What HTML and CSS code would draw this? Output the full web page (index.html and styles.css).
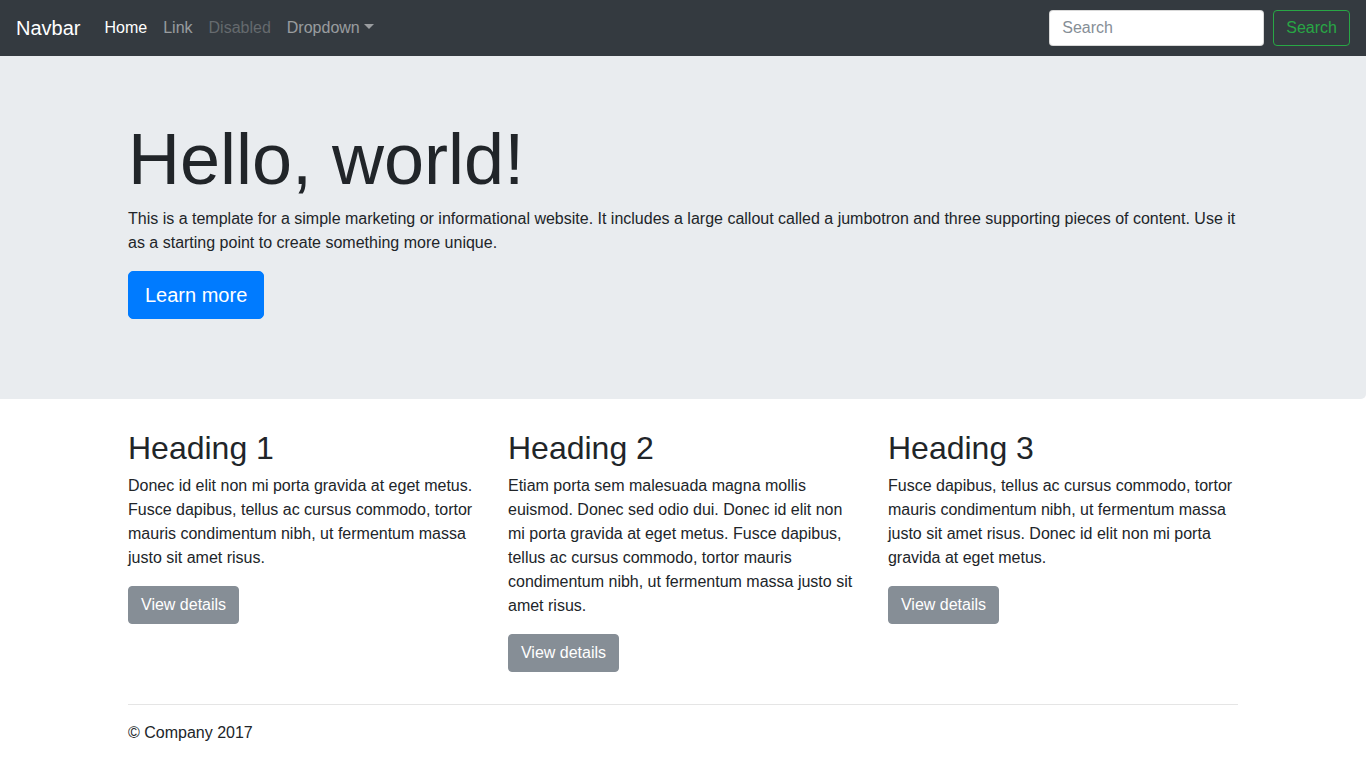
FILE: index.html
```
<!DOCTYPE html>
<html lang="en">
<head>
<meta charset="utf-8">
<title>Jumbotron Template</title>
<link rel="stylesheet" href="styles.css">
</head>
<body>
<nav class="navbar">
  <a class="brand" href="#">Navbar</a>
  <ul class="nav">
    <li><a class="nav-link active" href="#">Home</a></li>
    <li><a class="nav-link" href="#">Link</a></li>
    <li><a class="nav-link disabled" href="#">Disabled</a></li>
    <li><a class="nav-link dropdown-toggle" href="#">Dropdown</a></li>
  </ul>
  <form class="search-form">
    <input class="search-input" type="text" placeholder="Search">
    <button class="btn-outline-success" type="button">Search</button>
  </form>
</nav>
<main>
  <div class="jumbotron">
    <div class="container">
      <h1 class="display">Hello, world!</h1>
      <p class="lead-text">This is a template for a simple marketing or informational website. It includes a large callout called a jumbotron and three supporting pieces of content. Use it as a starting point to create something more unique.</p>
      <p class="lead-text"><a class="btn btn-primary btn-lg" href="#">Learn more</a></p>
    </div>
  </div>
  <div class="container">
    <div class="row">
      <div class="col">
        <h2 class="heading">Heading 1</h2>
        <p class="text">Donec id elit non mi porta gravida at eget metus. Fusce dapibus, tellus ac cursus commodo, tortor mauris condimentum nibh, ut fermentum massa justo sit amet risus.</p>
        <p class="text"><a class="btn btn-secondary" href="#">View details</a></p>
      </div>
      <div class="col">
        <h2 class="heading">Heading 2</h2>
        <p class="text">Etiam porta sem malesuada magna mollis euismod. Donec sed odio dui. Donec id elit non mi porta gravida at eget metus. Fusce dapibus, tellus ac cursus commodo, tortor mauris condimentum nibh, ut fermentum massa justo sit amet risus.</p>
        <p class="text"><a class="btn btn-secondary" href="#">View details</a></p>
      </div>
      <div class="col">
        <h2 class="heading">Heading 3</h2>
        <p class="text">Fusce dapibus, tellus ac cursus commodo, tortor mauris condimentum nibh, ut fermentum massa justo sit amet risus. Donec id elit non mi porta gravida at eget metus.</p>
        <p class="text"><a class="btn btn-secondary" href="#">View details</a></p>
      </div>
    </div>
    <hr class="rule">
  </div>
</main>
<footer class="container">
  <p class="text">&copy; Company 2017</p>
</footer>
</body>
</html>
```
FILE: styles.css
```
* { box-sizing: border-box; }
html, body { margin: 0; padding: 0; }
body {
  font-family: "Liberation Sans", Arial, sans-serif;
  font-size: 16px;
  line-height: 1.5;
  color: #212529;
  background: #fff;
}
a { text-decoration: none; }

.navbar {
  display: flex;
  align-items: center;
  height: 56px;
  padding: 8px 16px;
  background: #343a40;
}
.brand {
  font-size: 20px;
  line-height: 30px;
  padding: 5px 0;
  margin-right: 16px;
  color: #fff;
}
.nav {
  display: flex;
  list-style: none;
  margin: 0;
  padding: 0;
}
.nav-link {
  display: block;
  padding: 8px;
  color: rgba(255,255,255,.5);
}
.nav-link.active { color: #fff; }
.nav-link.disabled { color: rgba(255,255,255,.25); }
.dropdown-toggle::after {
  content: "";
  display: inline-block;
  margin-left: 4px;
  vertical-align: 4px;
  border-top: 5px solid;
  border-left: 5px solid transparent;
  border-right: 5px solid transparent;
}
.search-form {
  margin-left: auto;
  display: flex;
  align-items: center;
}
.search-input {
  width: 215px;
  height: 36px;
  padding: 6px 12px;
  margin-right: 9px;
  font-family: inherit;
  font-size: 16px;
  color: #495057;
  background: #fff;
  border: 1px solid rgba(0,0,0,.15);
  border-radius: 4px;
  outline: none;
}
.search-input::placeholder { color: #868e96; opacity: 1; }
.btn-outline-success {
  height: 36px;
  padding: 0 12px;
  font-family: inherit;
  font-size: 16px;
  color: #28a745;
  background: transparent;
  border: 1px solid #28a745;
  border-radius: 4px;
}

.jumbotron {
  background: #e9ecef;
  padding: 64px 32px;
  margin-bottom: 32px;
  border-radius: 0 0 5px 0;
}
.container {
  max-width: 1140px;
  margin: 0 auto;
  padding: 0 15px;
}
.display {
  font-size: 72px;
  font-weight: 300;
  line-height: 1.1;
  margin: 0 0 8px;
}
.lead-text, .text {
  margin: 0 0 16px;
}
.btn {
  display: inline-block;
  border: 1px solid transparent;
  border-radius: 4px;
  color: #fff;
  line-height: 1.5;
}
.btn-primary {
  background: #007bff;
  border-color: #007bff;
}
.btn-lg {
  font-size: 20px;
  padding: 8px 16px;
  border-radius: 5px;
}
.btn-secondary {
  background: #868e96;
  border-color: #868e96;
  padding: 6px 12px;
  font-size: 16px;
}
.row {
  display: flex;
  margin: 0 -15px;
}
.col {
  flex: 0 0 33.3333%;
  padding: 0 15px;
}
.heading {
  font-size: 32px;
  font-weight: 400;
  line-height: 1.1;
  margin: 0 0 8px;
}
.rule {
  margin: 16px 0;
  border: 0;
  border-top: 1px solid rgba(0,0,0,.1);
}
```
